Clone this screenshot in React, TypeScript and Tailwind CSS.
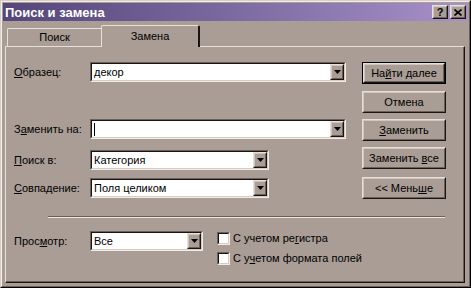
import type { ReactNode } from 'react'

// Win2000-style "Поиск и замена" dialog

function Sunken({ className = '', children }: { className?: string; children?: ReactNode }) {
  return (
    <div
      className={`border border-t-[#6b615b] border-l-[#6b615b] border-r-[#f2ece6] border-b-[#f2ece6] ${className}`}
    >
      <div className="flex h-full w-full items-center border border-t-[#1a1512] border-l-[#1a1512] border-r-[#d6ccc4] border-b-[#d6ccc4] bg-white">
        {children}
      </div>
    </div>
  )
}

function Raised({ className = '', children }: { className?: string; children?: ReactNode }) {
  return (
    <div
      className={`border border-t-[#e8e0d8] border-l-[#e8e0d8] border-r-[#1a1512] border-b-[#1a1512] bg-[#a99d95] ${className}`}
    >
      <div className="flex h-full w-full items-center justify-center border border-t-[#cfc5bd] border-l-[#cfc5bd] border-r-[#6b615b] border-b-[#6b615b]">
        {children}
      </div>
    </div>
  )
}

function Arrow() {
  return (
    <svg width="7" height="4" viewBox="0 0 7 4" aria-hidden="true">
      <path d="M0 0h7L3.5 4z" fill="#000" />
    </svg>
  )
}

function Combo({ value, width }: { value: string; width: string }) {
  return (
    <Sunken className={`h-[20px] ${width}`}>
      <span className="flex-1 truncate pl-[2px] leading-none">{value}</span>
      <Raised className="h-full w-[14px] shrink-0">
        <Arrow />
      </Raised>
    </Sunken>
  )
}

function Btn({ children, def = false, mt }: { children: ReactNode; def?: boolean; mt: string }) {
  return (
    <div className={`h-[22px] w-[84px] ${mt} ${def ? 'border border-black' : ''}`}>
      <Raised className="h-full w-full">
        <span className="leading-none">{children}</span>
      </Raised>
    </div>
  )
}

function Label({ children }: { children: ReactNode }) {
  return <span className="w-[76px] shrink-0 leading-none">{children}</span>
}

function Check({ children, mt = '' }: { children: ReactNode; mt?: string }) {
  return (
    <div className={`flex items-center gap-[3px] ${mt}`}>
      <Sunken className="h-[13px] w-[13px]" />
      <span className="leading-none">{children}</span>
    </div>
  )
}

export default function App() {
  return (
    <div className="h-[288px] w-[471px] border border-t-[#d9cfc7] border-l-[#d9cfc7] border-r-black border-b-black bg-[#a99d95] font-['Liberation_Sans',Arial,sans-serif] text-[11px] text-black">
      <div className="h-full border border-t-[#f4eee8] border-l-[#f4eee8] border-r-[#6b615b] border-b-[#6b615b] p-px">
        {/* Заголовок */}
        <div className="flex h-[18px] items-center justify-between bg-linear-to-r from-[#54457a] via-[#7c6ba0] to-[#a891c8] pl-[2px] pr-[2px]">
          <span className="text-[13px] font-bold leading-none text-white">Поиск и замена</span>
          <div className="flex gap-[2px]">
            <Raised className="h-[14px] w-[16px]">
              <span className="text-[11px] font-bold leading-none">?</span>
            </Raised>
            <Raised className="h-[14px] w-[16px]">
              <svg width="8" height="7" viewBox="0 0 8 7" aria-hidden="true">
                <path d="M0.5 0.5L7.5 6.5M7.5 0.5L0.5 6.5" stroke="#000" strokeWidth="1.6" />
              </svg>
            </Raised>
          </div>
        </div>

        <div className="ml-[2px] mt-[4px] w-[460px]">
          {/* Вкладки */}
          <div className="flex h-[21px] items-end pl-[2px]">
            <div className="flex h-[18px] w-[94px] items-center justify-center rounded-tl-[2px] border-l border-t border-[#e8e0d8]">
              <span className="leading-none">Поиск</span>
            </div>
            <div className="relative z-10 -mb-px flex h-[22px] w-[99px] items-start justify-center rounded-t-[2px] border-l border-t border-r-2 border-l-[#e8e0d8] border-t-[#e8e0d8] border-r-[#1a1512] bg-[#a99d95] pt-[5px]">
              <span className="leading-none">Замена</span>
            </div>
          </div>

          {/* Панель */}
          <div className="h-[237px] border border-t-[#e8e0d8] border-l-[#e8e0d8] border-r-[#1a1512] border-b-[#1a1512]">
            <div className="h-full border-r border-b border-[#6b615b] pl-[8px] pt-[15px]">
              <div className="flex">
                <div className="flex w-[332px] flex-col">
                  <div className="flex h-[20px] items-center">
                    <Label>
                      <u>О</u>бразец:
                    </Label>
                    <Combo value="декор" width="w-[256px]" />
                  </div>
                  <div className="mt-[37px] flex h-[20px] items-center">
                    <Label>
                      З<u>а</u>менить на:
                    </Label>
                    <Sunken className="h-[20px] w-[256px]">
                      <span className="ml-[2px] h-[13px] w-px bg-black" />
                      <span className="flex-1" />
                      <Raised className="h-full w-[14px] shrink-0">
                        <Arrow />
                      </Raised>
                    </Sunken>
                  </div>
                  <div className="mt-[11px] flex h-[20px] items-center">
                    <Label>
                      <u>П</u>оиск в:
                    </Label>
                    <Combo value="Категория" width="w-[179px]" />
                  </div>
                  <div className="mt-[8px] flex h-[20px] items-center">
                    <Label>
                      <u>С</u>овпадение:
                    </Label>
                    <Combo value="Поля целиком" width="w-[179px]" />
                  </div>
                </div>

                <div className="ml-[16px] flex flex-col">
                  <Btn def mt="">
                    На<u>й</u>ти далее
                  </Btn>
                  <Btn mt="mt-[7px]">Отмена</Btn>
                  <Btn mt="mt-[6px]">
                    <u>З</u>аменить
                  </Btn>
                  <Btn mt="mt-[6px]">
                    Заменить <u>в</u>се
                  </Btn>
                  <Btn mt="mt-[8px]">
                    &lt;&lt; Мень<u>ш</u>е
                  </Btn>
                </div>
              </div>

              {/* Разделитель */}
              <div className="ml-[34px] mt-[17px] w-[397px] border-t border-b border-t-[#6b615b] border-b-[#ede6df]" />

              <div className="mt-[13px] flex items-start">
                <div className="flex h-[20px] items-center">
                  <Label>
                    Прос<u>м</u>отр:
                  </Label>
                  <Combo value="Все" width="w-[113px]" />
                </div>
                <div className="ml-[14px] mt-px flex flex-col">
                  <Check>
                    С учетом ре<u>г</u>истра
                  </Check>
                  <Check mt="mt-[7px]">
                    С у<u>ч</u>етом формата полей
                  </Check>
                </div>
              </div>
            </div>
          </div>
        </div>
      </div>
    </div>
  )
}
